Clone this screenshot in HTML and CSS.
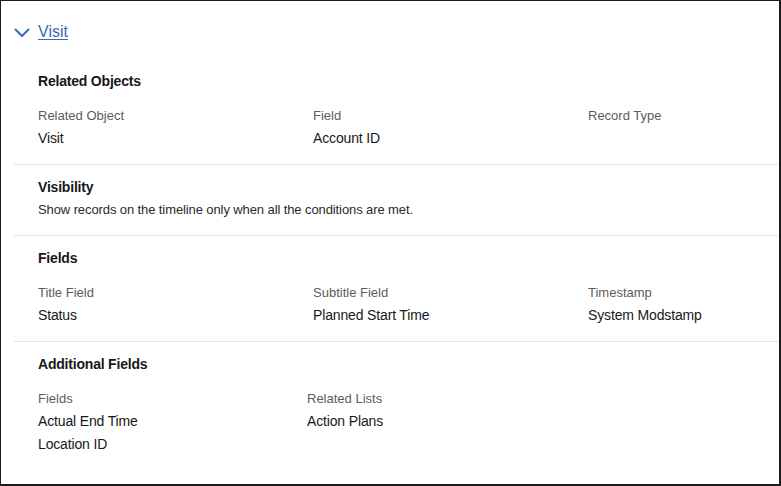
FILE: index.html
```html
<!DOCTYPE html>
<html lang="en">
<head>
<meta charset="utf-8">
<title>Visit</title>
<link rel="stylesheet" href="styles.css">
</head>
<body>
<div class="panel">
  <div class="header">
    <svg class="chevron" width="16" height="10" viewBox="0 0 16 10" aria-hidden="true">
      <path d="M1.5 1.5 L8 8 L14.5 1.5" fill="none" stroke="#3b6aaf" stroke-width="2" stroke-linecap="round" stroke-linejoin="round"/>
    </svg>
    <a class="title-link" href="#">Visit</a>
  </div>

  <section class="section first">
    <h3 class="heading">Related Objects</h3>
    <div class="grid three">
      <div class="field"><div class="label">Related Object</div><div class="value">Visit</div></div>
      <div class="field"><div class="label">Field</div><div class="value">Account ID</div></div>
      <div class="field"><div class="label">Record Type</div><div class="value"></div></div>
    </div>
  </section>

  <section class="section">
    <h3 class="heading">Visibility</h3>
    <p class="desc">Show records on the timeline only when all the conditions are met.</p>
  </section>

  <section class="section">
    <h3 class="heading">Fields</h3>
    <div class="grid three">
      <div class="field"><div class="label">Title Field</div><div class="value">Status</div></div>
      <div class="field"><div class="label">Subtitle Field</div><div class="value">Planned Start Time</div></div>
      <div class="field"><div class="label">Timestamp</div><div class="value">System Modstamp</div></div>
    </div>
  </section>

  <section class="section">
    <h3 class="heading">Additional Fields</h3>
    <div class="grid two">
      <div class="field"><div class="label">Fields</div><div class="value">Actual End Time</div><div class="value">Location ID</div></div>
      <div class="field"><div class="label">Related Lists</div><div class="value">Action Plans</div></div>
    </div>
  </section>
</div>
</body>
</html>
```

FILE: styles.css
```css
* { box-sizing: border-box; }
html, body { margin: 0; padding: 0; background: #ffffff; }
body {
  font-family: "Liberation Sans", Arial, sans-serif;
  color: #181818;
  width: 781px;
  height: 486px;
  overflow: hidden;
}
.panel {
  width: 781px;
  height: 486px;
  border: 1px solid #1c1c1c;
  border-right-width: 2px;
  border-bottom-width: 2px;
  overflow: hidden;
}
.header {
  height: 62px;
  display: flex;
  align-items: center;
  padding-left: 13px;
  gap: 8px;
}
.chevron { display: block; margin-top: 2px; }
.title-link {
  font-size: 16px;
  line-height: 20px;
  color: #3b6aaf;
  text-decoration: underline;
  text-underline-offset: 2px;
}
.section {
  margin-left: 13px;
  padding: 12px 0 14px 24px;
  border-top: 1px solid #e5e5e5;
}
.section.first {
  border-top: none;
  padding-top: 8px;
}
.heading {
  margin: 0;
  font-size: 14px;
  line-height: 20px;
  font-weight: 700;
  color: #181818;
  letter-spacing: -0.2px;
}
.desc {
  margin: 3px 0 1px;
  font-size: 13px;
  line-height: 20px;
  color: #2b2b2b;
  letter-spacing: -0.1px;
}
.grid {
  display: grid;
  margin-top: 14px;
}
.grid.three { grid-template-columns: 275px 275px 1fr; }
.grid.two { grid-template-columns: 269px 1fr; }
.label {
  font-size: 13px;
  line-height: 22px;
  color: #5c5c5c;
}
.value {
  font-size: 14px;
  line-height: 23px;
  color: #181818;
  min-height: 23px;
  letter-spacing: -0.15px;
}
```
